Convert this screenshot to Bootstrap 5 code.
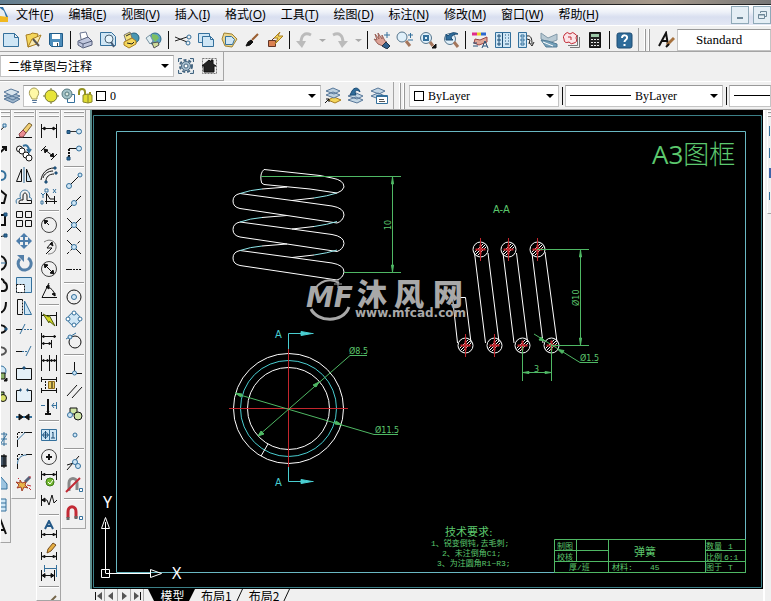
<!DOCTYPE html>
<html lang="zh-CN">
<head>
<meta charset="utf-8">
<meta name="viewport" content="width=device-width, initial-scale=1">
<title>弹簧 - CAD</title>
<link rel="stylesheet" href="https://cdn.jsdelivr.net/npm/bootstrap@5.3.0/dist/css/bootstrap.min.css">
<style>
:root{--face:#f0f0f0;--edge:#a5a5a5;--ui:"Noto Sans","Noto Sans CJK SC",sans-serif;--mono:"Liberation Serif","Noto Sans CJK SC",serif}
body{background:var(--face);font:12px/16px var(--ui);color:#000}
button{border:0;background:none;padding:0;color:inherit}
svg{fill:none;stroke:#111;stroke-width:1;display:block;flex:none}
.top-strip{height:5px;background:linear-gradient(90deg,#5f7d92,#8a8a88 12%,#a09a94 40%,#777 65%,#a89a8c 85%,#777);border-bottom:1px solid #222}
.menu-row{height:20px;background:linear-gradient(#fff 0,#eef1f8 35%,#d9dff0 60%,#e3e7f4)}
.menu-list{gap:15px;margin-left:8px}
.menu-list button{line-height:20px}
.menu-list u{text-underline-offset:2px}
.win-btn{width:18px;height:18px;border:1px solid #8fa9b8;background:#e4eef5}
.tool-row{border-bottom:1px solid var(--edge)}
.row-std{height:27px;padding-top:2px;border-top:1px solid #fff}
.row-ws,.row-layer{height:29px}
.row-ws{border:0}
.row-layer{border-top:1px solid #fff}
.tb{width:23px;height:22px;display:flex;align-items:center;justify-content:center;flex:none}
.tb svg,.side-btn svg{width:18px;height:18px}
.tb-first{width:21px}
.tb-drop{width:13px}
.v-sep{flex:none;width:6px;height:18px;background:linear-gradient(90deg,transparent 3px,#111 3px,#111 4px,transparent 4px)}
.v-end{flex:none;width:4px;align-self:stretch;border-right:1px solid var(--edge)}
.v-grip{flex:none;width:13px;align-self:stretch;margin:1px 1px 0 1px;background:linear-gradient(90deg,transparent 4px,#fff 4px,#fff 5px,#999 5px,#999 6px,transparent 6px,transparent 8px,#fff 8px,#fff 9px,#999 9px,#999 10px,transparent 10px)}
.combo{height:22px;background:#fff;border:1px solid #c4c4c4;border-top-color:#999;min-width:0;gap:1px}
.combo .form-select{--bs-form-select-bg-img:url("data:image/svg+xml,%3Csvg xmlns='http://www.w3.org/2000/svg' viewBox='0 0 8 4'%3E%3Cpath d='M0 0h8L4 4z'/%3E%3C/svg%3E");border:0;border-radius:0;padding:0 16px 0 3px;height:20px;min-width:0;font:12px/20px var(--mono);color:#000;background-color:transparent;background-size:8px 4px;background-position:right 4px center}
.combo .cjk{font-family:"Noto Sans CJK SC",sans-serif;padding-left:7px}
.combo .style-name{font-size:13px;padding-left:18px;background-image:none}
.w-ws{flex:0 1 174px}.w-layer{flex:0 1 298px}.w-color{flex:0 1 150px}.w-line{flex:0 1 158px}.w-rest{flex:1 1 0}
.ws-tools{width:224px;border-right:1px solid var(--edge);border-bottom:1px solid var(--edge)}
.swatch{flex:none;width:10px;height:10px;border:1px solid #000;background:#fff}
.line-demo{flex:none;width:61px;height:1px;background:#000;margin-left:4px}
.side-bar{width:25px;padding-bottom:4px;border-right:1px solid var(--edge);border-bottom:1px solid var(--edge);border-left:1px solid #fff;flex:none;align-self:flex-start}
.side-draw{width:11px;overflow:hidden}
.side-long{align-self:stretch;overflow:hidden}
.side-btn{width:22px;height:22px;display:flex;align-items:center;justify-content:center;flex:none}
.h-grip{width:20px;height:10px;flex:none;background:linear-gradient(transparent 1px,#fff 1px,#fff 2px,#999 2px,#999 3px,transparent 3px,transparent 5px,#fff 5px,#fff 6px,#999 6px,#999 7px,transparent 7px)}
.h-sep{width:20px;height:6px;flex:none;background:linear-gradient(transparent 2px,#999 2px,#999 3px,#fff 3px,#fff 4px,transparent 4px)}
.b{stroke:#34709c}.bf{stroke:#34709c;fill:#cfe6f5}.n{stroke:#1c4c74;fill:#2f6c9a}.g{stroke:#777}.k{fill:#111}.y{fill:#f4d65a;stroke:#a87d20}.r{stroke:#c22a35}.w{fill:#fff}.gn{fill:#73b72d;stroke:#3d7a18}
.d{stroke-dasharray:2 1}.t2{stroke-width:2}.t3{stroke-width:3}
.model-space{background:#000;border-left:2px solid #5f8f8f;min-height:0;min-width:0}
.model-space svg{width:100%;height:100%;stroke:#fff}
.c-gr{stroke:#4fb864}.c-cy{stroke:#49cdd0}.c-fr{stroke:#69b8c2}.c-rd{stroke:#c3262d}
.model-space text{stroke:none;fill:#5cc86e;font-family:"DejaVu Sans","Noto Sans CJK SC",sans-serif}
.model-space .f-dim{font-size:8px}
.model-space .f-note{font-size:8px;font-family:"Liberation Mono","Noto Sans CJK SC",monospace}
.model-space .f-head{font-size:11px}
.model-space .f-frame{font-size:26px;font-weight:300;font-family:"Open Sans","Noto Sans CJK SC",sans-serif}
.model-space .f-frame .latin{font-weight:400}
.model-space .f-sec{font-size:10px}
.model-space .f-cy{fill:#49cdd0}
.model-space .f-ucs{font:16px "Noto Sans",sans-serif;fill:#fff}
.model-space .f-wm{fill:#a8a8a8;font-weight:900;font-size:30px;font-family:"Noto Sans CJK SC",sans-serif}
.model-space .f-url{fill:#a8a8a8;font:bold 12px "DejaVu Sans",sans-serif}
.model-space .f-logo{fill:#a8a8a8;font:italic bold 28px "DejaVu Sans",sans-serif}
.sheet-row{height:12px;flex:none;overflow:hidden;background:var(--face);padding-left:2px}
.page-btn{width:13px;height:14px;border-right:1px solid #aaa;display:flex;align-items:center;justify-content:center;flex:none}
.sheet-tab{height:14px;line-height:14px;padding:0 4px 0 6px;flex:none;font-family:"Noto Sans CJK SC",sans-serif}
.sheet-on{background:#000;color:#fff;width:47px;padding:0 0 0 2px;clip-path:polygon(0 0,100% 0,calc(100% - 7px) 100%,7px 100%)}
.slant{width:7px;height:14px;flex:none}
.right-edge{width:8px;flex:none;border-left:2px solid #fff;overflow:hidden}
.edge-bar{width:4px;height:104px;border-left:1px solid #fff;border-bottom:1px solid var(--edge);overflow:hidden}
.edge-bar .h-grip{width:4px}
</style>
<script src="https://cdn.jsdelivr.net/npm/bootstrap@5.3.0/dist/js/bootstrap.bundle.min.js"></script>
</head>
<body class="vh-100 overflow-hidden d-flex flex-column">
<header class="flex-shrink-0">
<div class="top-strip"></div>
<nav class="menu-row d-flex align-items-center overflow-hidden" aria-label="主菜单">
<svg width="8" height="18" viewBox="0 0 8 18"><path d="M0 1h3l5 10v5H0z" fill="#2d6fa8" stroke="none"/><path d="M0 2l4 3 2 6H0z" fill="#e8edf0" stroke="none"/><path d="M0 10l8 1v5H0z" fill="#f0b820" stroke="none"/></svg>
<div class="menu-list d-flex text-nowrap">
<button>文件(<u>F</u>)</button><button>编辑(<u>E</u>)</button><button>视图(<u>V</u>)</button><button>插入(<u>I</u>)</button><button>格式(<u>O</u>)</button><button>工具(<u>T</u>)</button><button>绘图(<u>D</u>)</button><button>标注(<u>N</u>)</button><button>修改(<u>M</u>)</button><button>窗口(<u>W</u>)</button><button>帮助(<u>H</u>)</button>
</div>
<div class="ms-auto d-flex gap-1 flex-shrink-0">
<button class="win-btn" aria-label="最小化"><svg width="16" height="16" viewBox="0 0 16 16"><path d="M5 11h6" stroke="#6d8798" class="t2"/></svg></button>
<button class="win-btn" aria-label="还原"><svg width="16" height="16" viewBox="0 0 16 16"><path d="M6.500 6V4.500h6v5H11M4.500 7.500h6v4h-6zM4 8h7" stroke="#6d8798"/></svg></button>
</div>
</nav>
<div class="tool-row row-std d-flex align-items-center overflow-hidden">
<button class="tb tb-first" aria-label="新建"><svg viewBox="0 0 18 18"><path class="bf" d="M1.500 2.500h11l4 4v9h-15zM12.500 2.500v4h4"/></svg></button>
<button class="tb" aria-label="打开"><svg viewBox="0 0 18 18"><path class="y" d="M2 4l5-1 1-1 6 1-1 4-4 7-5 2z"/><path fill="#f9eab0" stroke="#a87d20" d="M4 16l4-8 9-4-4 9z"/><path class="t2" d="M9 8l6 7" stroke="#555"/></svg></button>
<button class="tb" aria-label="保存"><svg viewBox="0 0 18 18"><path fill="#4d8dbb" stroke="#205b88" d="M2.500 2.500h13v13h-11l-2-2z"/><path class="w" stroke="none" d="M5 3h8v5H5zM6 11h6v4H6z"/><path stroke="#444" d="M10.500 12v3"/></svg></button>
<span class="v-sep"></span>
<button class="tb" aria-label="打印"><svg viewBox="0 0 18 18"><path fill="#fff" stroke="#6c7792" d="M5 8L4 2l6-1 2 6"/><path fill="#bfc6dd" stroke="#555f7b" d="M2 10l10-4 4 4v4l-9 3-5-3z"/><path stroke="#555f7b" d="M3 11l4 2 9-3M7 13v3"/></svg></button>
<button class="tb" aria-label="打印预览"><svg viewBox="0 0 18 18"><path class="bf" d="M1.500 1.500h11l4 4v9h-15z"/><circle cx="10" cy="8" r="4" fill="#e7f4fb" stroke="#4a6275"/><path class="t2" stroke="#435a75" d="M12 11l3 5"/></svg></button>
<button class="tb" aria-label="发布"><svg viewBox="0 0 18 18"><circle cx="12" cy="7" r="5" fill="#4a97b3" stroke="#26607c"/><path fill="#f4e27a" stroke="#777" d="M2 4l6-3 2 6-6 3z"/><path class="y" d="M2 11l8-4 4 3v3l-7 4-5-3z"/><path stroke="#222" d="M4 5l4-2M5 12l5 1 2-2"/></svg></button>
<button class="tb" aria-label="三维DWF"><svg viewBox="0 0 18 18"><circle cx="10" cy="8" r="6" fill="#5aa2c1" stroke="#2f6c8d"/><path fill="#7ec062" stroke="none" d="M7 3l5 1 2 3-4 4-3-4z"/><path fill="#e0eef2" stroke="#7892a2" d="M1 7l4-3 3 6-3 3z"/><path fill="#cfdc9a" stroke="#555" d="M7 12l6-1 1 3-5 3z"/></svg></button>
<span class="v-sep"></span>
<button class="tb" aria-label="剪切"><svg viewBox="0 0 18 18"><path d="M1 6l12 5M1 10l12-4" stroke="#222"/><circle cx="14" cy="12" r="2" class="b"/><circle cx="15" cy="6" r="2" class="b"/></svg></button>
<button class="tb" aria-label="复制"><svg viewBox="0 0 18 18"><path class="bf" d="M1.500 2.500h11v9h-11z"/><path class="bf" d="M5.500 5.500h8l3 3v7h-11zM13.500 5.500v3h3"/></svg></button>
<button class="tb" aria-label="粘贴"><svg viewBox="0 0 18 18"><path fill="#ecd58d" stroke="#a08436" d="M4 2l8 1 5 5-5 8-7-1-3-7z"/><path class="bf" d="M5.500 5.500h6l3 3-2 5h-7z"/></svg></button>
<button class="tb" aria-label="特性匹配"><svg viewBox="0 0 18 18"><path d="M9 9l6-6" stroke="#9a5e32" class="t2"/><path class="k" d="M3 15l2-4 3-2 2 2-3 3z"/></svg></button>
<button class="tb" aria-label="块编辑器"><svg viewBox="0 0 18 18"><path d="M6 9l6-6M2.500 9.500h7v6h-7z" fill="#db8153" stroke="#613526"/><path class="y" d="M14 1L8 7h4l-3 6 8-8h-5z"/></svg></button>
<span class="v-sep"></span>
<button class="tb" aria-label="放弃"><svg viewBox="0 0 18 18"><path d="M16 4C10 1 6 4 6 12" stroke="#bbb" class="t3"/><path d="M1 10h10l-4 7z" fill="#bbb" stroke="none"/></svg></button>
<button class="tb tb-drop" aria-label="放弃列表"><svg viewBox="0 0 18 18"><path d="M6 8h7l-3.500 3z" fill="#aaa" stroke="none"/></svg></button>
<button class="tb" aria-label="重做"><svg viewBox="0 0 18 18"><path d="M2 4c6-3 10 0 10 8" stroke="#bbb" class="t3"/><path d="M7 10h10l-6 7z" fill="#bbb" stroke="none"/></svg></button>
<button class="tb tb-drop" aria-label="重做列表"><svg viewBox="0 0 18 18"><path d="M6 8h7l-3.500 3z" fill="#aaa" stroke="none"/></svg></button>
<span class="v-sep"></span>
<button class="tb" aria-label="平移"><svg viewBox="0 0 18 18"><path d="M2 3l4 5-1-6 4 6V4l3 6 2 1-4 4-5-2-4-5 3 1z" fill="#dda397" stroke="#9a6259"/><path d="M9 15l4-4 4 4-3 3z" fill="#315f8c" stroke="#234"/><path class="b" d="M14 1v6M11 4h6"/></svg></button>
<button class="tb" aria-label="实时缩放"><svg viewBox="0 0 18 18"><circle cx="6" cy="6" r="5" fill="#e0f0fa" stroke="#56758c"/><path d="M10 10l4 5" class="t3" stroke="#a4765c"/><path d="M12 4h5M14.500 2v5M12 9h5" class="b"/></svg></button>
<button class="tb" aria-label="窗口缩放"><svg viewBox="0 0 18 18"><circle cx="7" cy="7" r="5.500" fill="#e0f0fa" stroke="#56758c"/><path class="b t2" d="M5 5h4v4H5z"/><path d="M11 11l3 4" class="t3" stroke="#a4765c"/><path class="k" d="M17 13v4h-4z"/></svg></button>
<button class="tb" aria-label="缩放上一个"><svg viewBox="0 0 18 18"><circle cx="8" cy="8" r="5.500" fill="#e0f0fa" stroke="#56758c"/><path d="M12 11l4 5" class="t3" stroke="#a4765c"/><path class="n" d="M4 9V3l2 2c3-4 7-4 10-2-4 0-6 1-7 4l2 2z"/></svg></button>
<span class="v-sep"></span>
<button class="tb" aria-label="特性"><svg viewBox="0 0 18 18"><path stroke="#e02c8a" class="t3" d="M1 3h5"/><path stroke="#e9d323" class="t3" d="M6 3h4"/><path stroke="#2b68ce" class="t3" d="M10 3h5"/><path d="M4 8l5 1 7-3v5l-8 3-5-2z" fill="#e0a797" stroke="#944"/><path d="M2 12h4M2 15h5M11 17l3-7 3 7M12 15h4" stroke="#234d74"/></svg></button>
<button class="tb" aria-label="设计中心"><svg viewBox="0 0 18 18"><path class="bf" d="M1.500 1.500h15v15h-15z"/><path stroke="#1d4f77" d="M8.500 2v14M4 4h2v2H4zM4 8h2v2H4zM4 12h2v2H4zM11 4h1M14 4h1M11 7h1M14 7h1M11 10h1M14 10h1M11 13h4"/></svg></button>
<button class="tb" aria-label="工具选项板"><svg viewBox="0 0 18 18"><path class="bf" d="M1.500 1.500h8v15h-8z"/><path class="b" d="M4 4h3v2H4zM4 8h3v2H4zM4 12h3v2H4z"/><path d="M10 5c4-1 5 3 5 8M12 11l3 4 2-4M10 8l3 1-1 4" stroke="#222"/></svg></button>
<button class="tb" aria-label="图纸集"><svg viewBox="0 0 18 18"><path fill="#b9cad4" stroke="#8299a8" d="M1 2l7 5 9-4v6l-8 3-8-4z"/><path fill="#75a0b9" stroke="#527b95" d="M1 9l7 1 9 3v3H6z"/><path stroke="#fff" d="M3 11l10 4"/></svg></button>
<button class="tb" aria-label="标记集"><svg viewBox="0 0 18 18"><path d="M5 14.500h9.500V4M7 16.500h9.500V6" class="g"/><path class="r" fill="#fbe4e7" d="M2 3q2-3 5 0 3-3 5 0 3 1 1 4 2 4-2 5-3 2-5-1-5 2-5-3-2-2 1-5z"/><path class="r" d="M5 6h3v3"/></svg></button>
<button class="tb" aria-label="计算器"><svg viewBox="0 0 18 18"><path fill="#222" d="M3.500 1.500h11v15h-11z"/><path fill="#9dc7a7" stroke="none" d="M5 3h8v3H5z"/><path stroke="#e4e4e4" stroke-dasharray="2 1" d="M5 8.500h8M5 11.500h8M5 14.500h8"/></svg></button>
<span class="v-sep"></span>
<button class="tb" aria-label="帮助"><svg viewBox="0 0 18 18"><rect x="2" y="2" width="15" height="15" rx="2" fill="#2f6c9a" stroke="#1f4d73"/><path d="M7 7c0-4 6-3 5 0 0 2-2.500 1.500-2.500 4M9.500 13v2" stroke="#fff" class="t2"/></svg></button>
<span class="v-end"></span><span class="v-grip"></span>
<button class="tb" aria-label="文字样式"><svg viewBox="0 0 18 18"><path class="t2" d="M2 15L9 2l2 12M5 10h5"/><path d="M10 14l7-7" stroke="#a6713d" class="t3"/><path d="M9 16l3-3" class="t2"/></svg></button>
<div class="combo w-rest d-flex align-items-center"><select class="form-select style-name" aria-label="文字样式名"><option>Standard</option></select></div>
</div>
<div class="tool-row row-ws d-flex">
<div class="ws-tools d-flex align-items-center">
<div class="combo w-ws d-flex"><select class="form-select cjk" aria-label="工作空间"><option>二维草图与注释</option></select></div>
<button class="tb" aria-label="工作空间设置"><svg viewBox="0 0 18 18"><path fill="#c9dce8" stroke="#446580" d="M1.500 5V1.500H5M13 1.500h3.500V5M16.500 13v3.500H13M5 16.500H1.500V13"/><circle cx="9" cy="9" r="6" stroke="#446580" class="t2" stroke-dasharray="3 2"/><circle cx="9" cy="9" r="4.500" stroke="#446580" fill="#a9c0d0"/><circle cx="9" cy="9" r="2" stroke="#446580" fill="#fff"/></svg></button>
<button class="tb" aria-label="我的工作空间"><svg viewBox="0 0 18 18"><path stroke="#777" stroke-dasharray="2 1" d="M2.500 1.500h14v15h-14z"/><path d="M4 15V9L2 9l7-6 2 2V3h2v4l3 2h-2v6z" fill="#222"/></svg></button>
</div></div>
<div class="tool-row row-layer d-flex align-items-center overflow-hidden">
<button class="tb" aria-label="图层特性"><svg viewBox="0 0 18 18"><path fill="#9eb6cc" stroke="#58789a" d="M1 12l8-3 8 3-7 4zM1 9l8-3 8 3-7 4z"/><path fill="#d9e5ee" stroke="#58789a" d="M1 5l7-3 8 3-7 4z"/></svg></button>
<div class="combo w-layer d-flex align-items-center ps-1">
<svg width="13" height="18" viewBox="0 0 13 18"><path fill="#fff8a6" stroke="#a69d53" d="M3 10C-1 5 3 1 6 1s7 4 3 9v2H4z"/><path stroke="#58789a" d="M4 13.500h5M4.500 15.500h4"/></svg>
<svg width="17" height="18" viewBox="0 0 17 18"><circle cx="9" cy="9" r="6" fill="#e7e438" stroke="#74742a"/><path stroke="#77772c" d="M9 1v2M9 15v2M1 9h2M15 9h2"/></svg>
<svg width="16" height="18" viewBox="0 0 16 18"><path class="b" d="M7.500 7.500h7v8h-7z"/><circle cx="7" cy="7" r="5" fill="#a3c3c8" stroke="#56797f"/><circle cx="7" cy="7" r="2" fill="#d9e9df" stroke="#56797f"/></svg>
<svg width="18" height="18" viewBox="0 0 18 18"><path stroke="#949322" class="t2" d="M2 8V5c0-4 6-4 6 0v4M13 7V5"/><path fill="#dfdc33" stroke="#88862a" d="M6 8l5-1 4 1v7l-4 1-5-1zM11 7v9"/></svg>
<span class="swatch"></span>
<select class="form-select" aria-label="图层"><option>0</option></select></div>
<button class="tb" aria-label="置为当前图层"><svg viewBox="0 0 18 18"><path class="y" d="M4 13l6-3 7 3-6 3z"/><path fill="#bcd0df" stroke="#58789a" d="M2 8l7-3 7 3-6 3zM2 4l7-3 7 3-6 3z"/><path d="M1 16l4-4M2 12h3v3"/></svg></button>
<button class="tb" aria-label="上一个图层"><svg viewBox="0 0 18 18"><path fill="#c3d6e4" stroke="#58789a" d="M1 13l8-3 7 3-6 3zM1 9l8-3 7 3-6 3z"/><path class="n" d="M3 8l2-4c2-4 7-4 8 1-2-2-4-2-5 0l1 3z"/></svg></button>
<button class="tb" aria-label="图层状态"><svg viewBox="0 0 18 18"><path fill="#c3d6e4" stroke="#58789a" d="M1 9l7-3 7 3-6 3zM1 4l7-3 7 3-6 3z"/><path class="b w" d="M6.500 8.500h11v8h-11z"/><path class="b t2" d="M7 9h10"/><path stroke="#555" d="M9 12.500h5M9 14.500h6"/></svg></button>
<span class="v-end"></span><span class="v-grip"></span>
<div class="combo w-color d-flex align-items-center ps-1"><span class="swatch"></span><select class="form-select" aria-label="颜色"><option>ByLayer</option></select></div>
<span class="v-sep"></span>
<div class="combo w-line d-flex align-items-center"><span class="line-demo"></span><select class="form-select" aria-label="线型"><option>ByLayer</option></select></div>
<span class="v-sep"></span>
<div class="combo w-rest d-flex align-items-center overflow-hidden"><span class="line-demo"></span></div>
</div>
</header>
<main class="d-flex flex-grow-1 overflow-hidden">
<aside class="side-bar side-draw d-flex flex-column align-items-end" aria-label="绘图">
<span class="h-grip"></span>
<button class="side-btn" aria-label="直线"><svg viewBox="0 0 18 18"><path d="M3 15L15 4"/><path class="bf" d="M13 2h3v3h-3z"/></svg></button>
<button class="side-btn" aria-label="构造线"><svg viewBox="0 0 18 18"><path class="t2" d="M2 16L16 3M12 3h4v4"/></svg></button>
<button class="side-btn" aria-label="多段线"><svg viewBox="0 0 18 18"><path class="b t2" d="M2 14h9c6 0 6-9 0-9"/></svg></button>
<button class="side-btn" aria-label="正多边形"><svg viewBox="0 0 18 18"><path class="t2" d="M3 6l7-4 6 5-2 8H5z"/></svg></button>
<button class="side-btn" aria-label="矩形"><svg viewBox="0 0 18 18"><path class="t2" d="M2 5h13v10H2z"/><path class="n" d="M14 3h3v3h-3z"/></svg></button>
<button class="side-btn" aria-label="圆弧"><svg viewBox="0 0 18 18"><path d="M3 15c0-7 5-11 12-11"/><path class="n" d="M14 2h3v3h-3z"/></svg></button>
<button class="side-btn" aria-label="圆"><svg viewBox="0 0 18 18"><circle class="t2" cx="9" cy="9" r="7"/><path class="b" d="M9 9h7"/></svg></button>
<button class="side-btn" aria-label="修订云线"><svg viewBox="0 0 18 18"><path class="t2" d="M4 15c-4-4 0-7 2-6 0-7 7-8 8-3 4 2 4 8 0 9z"/></svg></button>
<button class="side-btn" aria-label="样条曲线"><svg viewBox="0 0 18 18"><path class="t2" d="M2 10c3-8 6 6 10 4 3-2 4-6 4-10"/></svg></button>
<button class="side-btn" aria-label="椭圆"><svg viewBox="0 0 18 18"><ellipse class="t2" cx="9" cy="9" rx="7" ry="4"/><path class="n" d="M15 8h2v2h-2z"/></svg></button>
<button class="side-btn" aria-label="椭圆弧"><svg viewBox="0 0 18 18"><ellipse class="t2" cx="9" cy="9" rx="7" ry="4" stroke="#555"/></svg></button>
<button class="side-btn" aria-label="插入块"><svg viewBox="0 0 18 18"><circle cx="11" cy="7" r="5" class="bf"/><path d="M10 9h5v6h-5z" fill="#8db36b"/><path class="k" d="M17 14v3h-3z"/></svg></button>
<button class="side-btn" aria-label="创建块"><svg viewBox="0 0 18 18"><path fill="#8db36b" d="M8 6h6v5H8z"/><circle cx="13" cy="12" r="3.500" fill="#d9df6b"/></svg></button>
<button class="side-btn" aria-label="点"><svg viewBox="0 0 18 18"><path class="b" d="M9 8v2"/></svg></button>
<button class="side-btn" aria-label="图案填充"><svg viewBox="0 0 18 18"><path class="b" d="M2 4h15M2 9h15M2 14h15M14 2v14M9 16l8-12"/></svg></button>
<button class="side-btn" aria-label="渐变色"><svg viewBox="0 0 18 18"><path fill="#456" d="M9 4h7v10H9z"/><path d="M7 4h10M7 14h10M14 2v14"/></svg></button>
<button class="side-btn" aria-label="面域"><svg viewBox="0 0 18 18"><path fill="#9cc4e0" stroke="#34709c" d="M3 15V7l8-4 6 7v5z"/></svg></button>
<button class="side-btn" aria-label="表格"><svg viewBox="0 0 18 18"><path class="bf" d="M3 3h13v12H3zM3 7h13M3 11h13"/></svg></button>
<button class="side-btn" aria-label="多行文字"><svg viewBox="0 0 18 18"><path class="t2" d="M6 16l5-13 5 13M8 12h6"/></svg></button>
</aside>
<aside class="side-bar d-flex flex-column align-items-center" aria-label="修改">
<span class="h-grip"></span>
<button class="side-btn" aria-label="删除"><svg viewBox="0 0 18 18"><path d="M1 15.500h16"/><path fill="#f2cf73" stroke="#77602f" d="M8 8l6-7 3 2-6 8z"/><path fill="#e98c91" stroke="#8c4448" d="M4 12l4-4 3 3-3 4H5z"/></svg></button>
<button class="side-btn" aria-label="复制对象"><svg viewBox="0 0 18 18"><circle cx="4.500" cy="5" r="3" class="w"/><circle cx="7" cy="7" r="3" class="w"/><circle cx="11" cy="11" r="3" class="w"/><circle cx="14" cy="14" r="3" class="w"/><path class="b t2" d="M8 2c4-2 6 1 6 5M12 5l2 3 2-3"/></svg></button>
<button class="side-btn" aria-label="镜像"><svg viewBox="0 0 18 18"><path d="M6.500 3v12.500h-5z"/><path d="M11.500 3v12.500h5z" fill="#cfe6f5"/><path class="b" d="M9 1v16"/></svg></button>
<button class="side-btn" aria-label="偏移"><svg viewBox="0 0 18 18"><path class="b" d="M1.500 15.500c-1-4 0-5 4-5-3-11 11-11 9-1 2 0 2 1 2 3"/><path d="M4 15.500h12.500v-3H12V8c0-4-4-4-4 0v4H6c-2 0-2 2-2 3.500z"/></svg></button>
<button class="side-btn" aria-label="阵列"><svg viewBox="0 0 18 18"><path d="M1.500 1.500h6v6h-6zM10.500 1.500h6v6h-6zM1.500 10.500h6v6h-6zM10.500 10.500h6v6h-6z"/></svg></button>
<button class="side-btn" aria-label="移动"><svg viewBox="0 0 18 18"><path class="t2" stroke="#4c7dab" d="M9 3v12M3 9h12"/><path fill="#4c7dab" stroke="none" d="M9 1l4 4H5zM9 17l4-4H5zM1 9l4-4v8zM17 9l-4-4v8z"/></svg></button>
<button class="side-btn" aria-label="旋转"><svg viewBox="0 0 18 18"><path class="t3" stroke="#537fa8" d="M5 5a6.500 6.500 0 1 0 8-1"/><path fill="#537fa8" stroke="none" d="M2 1h7v7z"/></svg></button>
<button class="side-btn" aria-label="缩放"><svg viewBox="0 0 18 18"><path class="bf" d="M1.500 1.500h15v15h-15z"/><path class="d w" d="M1.500 8.500h8v8h-8z"/></svg></button>
<button class="side-btn" aria-label="拉伸"><svg viewBox="0 0 18 18"><path d="M7.500 1.500h-5v15h5" /><path class="d" d="M7.500 1.500v15"/><path class="bf" d="M9.500 3l7 13.500h-7z"/></svg></button>
<button class="side-btn" aria-label="修剪"><svg viewBox="0 0 18 18"><path class="b" d="M10 4L5 14"/><path d="M1 9.500h6"/><path class="d b" d="M9 9.500h8"/></svg></button>
<button class="side-btn" aria-label="延伸"><svg viewBox="0 0 18 18"><path class="b" d="M16 4l-5 10"/><path d="M1 9.500h6"/><path class="d b" d="M7 9.500h5"/></svg></button>
<button class="side-btn" aria-label="打断于点"><svg viewBox="0 0 18 18"><path fill="#e4f0f8" d="M1.500 4.500h15v11h-15z"/><path class="n" d="M8 3h2v2H8z"/></svg></button>
<button class="side-btn" aria-label="打断"><svg viewBox="0 0 18 18"><path fill="#e4f0f8" stroke="none" d="M1.500 4.500h15v11h-15z"/><path d="M5 4.500H1.500v11h15v-11H13"/><path class="n" d="M5 3h1v2H5zM12 3h1v2h-1z"/></svg></button>
<button class="side-btn" aria-label="合并"><svg viewBox="0 0 18 18"><path class="b t2" d="M1 9h16"/><path class="k" d="M4 6l4 3-4 3zM14 6l-4 3 4 3z"/></svg></button>
<button class="side-btn" aria-label="倒角"><svg viewBox="0 0 18 18"><path class="d" d="M2.500 8V2.500H9"/><path d="M2.500 17v-7M9 2.500h8"/><path class="b" d="M2.500 10L10 2.500"/></svg></button>
<button class="side-btn" aria-label="圆角"><svg viewBox="0 0 18 18"><path class="d" d="M2.500 8V2.500H9"/><path d="M2.500 17v-5M11 2.500h6"/><path class="b" d="M2.500 12c0-5 3-9 9-9"/></svg></button>
<button class="side-btn" aria-label="分解"><svg viewBox="0 0 18 18"><path class="t3" stroke="#57617a" d="M10 8l5-5"/><path fill="#e8b54a" stroke="#a33d2a" d="M5 6l2 3 4-1-1 3 3 3-4-1-2 4-1-4-4 1 2-3-3-3 4 1z"/><path class="r" d="M3 4l1 1M12 11l4 1M14 14l2 2M15 2v2"/></svg></button>
</aside>
<aside class="side-bar side-long d-flex flex-column align-items-center" aria-label="标注">
<span class="h-grip"></span>
<button class="side-btn" aria-label="线性"><svg viewBox="0 0 18 18"><path d="M1.500 2v14M16.500 2v14"/><path d="M2 6.500h14"/><path d="M5 5L2.500 6.500 5 8zM13 5l2.500 1.500L13 8z" class="k"/></svg></button>
<button class="side-btn" aria-label="对齐"><svg viewBox="0 0 18 18"><path d="M1 7l5-5M11 16l6-6M4 5l10 8"/><path class="k" d="M4 5l4 1-3 3zM14 13l-4-1 3-3z"/></svg></button>
<button class="side-btn" aria-label="弧长"><svg viewBox="0 0 18 18"><path d="M1 14C2 7 7 2 14 2M6 15c0-4 3-7 8-7"/><path d="M3 12C4 8 8 5 13 5"/><path class="n" d="M14 1h2v2h-2zM15 6h2v2h-2zM5 15h2v2H5z"/></svg></button>
<button class="side-btn" aria-label="坐标"><svg viewBox="0 0 18 18"><path d="M6.500 5v11M5 13.500h12M7 6l3 5h4M14.500 8v8"/><path class="b" d="M1 5l2 2 2-2M3 7v3M13 1l3 4M16 1l-3 4M5 1h3v3H5zM1 13h2v3H1z"/></svg></button>
<span class="h-sep"></span>
<button class="side-btn" aria-label="半径"><svg viewBox="0 0 18 18"><circle cx="9" cy="9" r="7.500" stroke="#444"/><path class="k" d="M4 4l5 5M4 4l4 1-3 3z"/></svg></button>
<button class="side-btn" aria-label="折弯"><svg viewBox="0 0 18 18"><path stroke="#777" d="M4 4c7-5 13 1 12 6s-5 6-8 6"/><path d="M12 4l-5 6h5l-6 6"/><path class="k" d="M12 4l1 4-3-2z"/></svg></button>
<button class="side-btn" aria-label="直径"><svg viewBox="0 0 18 18"><circle cx="9" cy="9" r="7.500" stroke="#444"/><path class="k" d="M4 4l10 10M4 4l4 1-3 3zM14 14l-4-1 3-3z"/></svg></button>
<button class="side-btn" aria-label="角度"><svg viewBox="0 0 18 18"><path d="M9 1L2 15.500h15M6 5c5 0 8 4 9 9"/><path class="k" d="M6 5l3-2v4zM15 14l-3-2 3-1z"/></svg></button>
<span class="h-sep"></span>
<button class="side-btn" aria-label="快速标注"><svg viewBox="0 0 18 18"><path d="M1.500 2v14M16.500 2v14M2 5.500h14"/><path fill="#d6dc26" stroke="#54600f" d="M3 4l6 3V5l6 11-6-5v2z"/></svg></button>
<button class="side-btn" aria-label="基线"><svg viewBox="0 0 18 18"><path d="M1.500 1v16M2 4.500h14M2 11.500h9M11.500 8v8"/><path class="k" d="M2 4.500l2-1v2zM16 4.500l-2-1v2zM2 11.500l2-1v2zM11 11.500l-2-1v2z"/></svg></button>
<button class="side-btn" aria-label="连续"><svg viewBox="0 0 18 18"><path d="M1.500 1v16M9.500 1v16M16.500 1v16M2 6.500h14"/><path class="k" d="M2 6.500l2-1v2zM9 6.500l-2-1v2zM10 6.500l2-1v2zM16 6.500l-2-1v2z"/></svg></button>
<button class="side-btn" aria-label="标注间距"><svg viewBox="0 0 18 18"><path d="M1.500 1v5M16.500 1v5M1.500 12v5M16.500 12v5M2 3.500h14M2 14.500h14"/><path fill="#e7ca5a" stroke="#8d6a1c" d="M8.500 5.500h6v7h-6z"/><path class="d" d="M5.500 5v8"/><path d="M11 7h2M11 9h2M11 11h2"/></svg></button>
<button class="side-btn" aria-label="折断标注"><svg viewBox="0 0 18 18"><path class="b" d="M1 7.500h4M12 7.500h5M14 5l-2 2.500 2 2.500M16.500 4v7"/><path class="t2" d="M8 1v15M5 16h6"/><path class="k" d="M8 16l-1-3h2z"/></svg></button>
<span class="h-sep"></span>
<button class="side-btn" aria-label="公差"><svg viewBox="0 0 18 18"><path class="bf" d="M1.500 3.500h15v11h-15zM9.500 3v12"/><circle class="b" cx="5.500" cy="9" r="2.500"/><path stroke="#1c4c74" d="M5.500 5v8M2 9h7M12 7l1-1v6M11 12h4"/></svg></button>
<button class="side-btn" aria-label="圆心标记"><svg viewBox="0 0 18 18"><circle cx="9" cy="9" r="7.500" stroke="#444"/><path class="t2" d="M9 6v6M6 9h6"/></svg></button>
<button class="side-btn" aria-label="检验"><svg viewBox="0 0 18 18"><path class="k" d="M1.500 1v9M16.500 1v9M2 4.500h14M2 4.500l3-1v2zM16 4.500l-3-1v2z"/><circle class="gn" cx="10" cy="12" r="4"/><path stroke="#fff" d="M8 12l2 2 3-4"/></svg></button>
<button class="side-btn" aria-label="折弯线性"><svg viewBox="0 0 18 18"><path d="M1.500 3v11M2 8h5l2 5 3-10 2 8 3-3"/><path class="k" d="M2 8l3-2v4z"/></svg></button>
<span class="h-sep"></span>
<button class="side-btn" aria-label="编辑标注"><svg viewBox="0 0 18 18"><path class="t2" stroke="#235887" d="M5 9l4-8 4 8M6 6h6"/><path class="k" d="M1.500 10v8M16.500 10v8M2 14.500h14M2 14.500l3-1v2zM16 14.500l-3-1v2z"/></svg></button>
<button class="side-btn" aria-label="编辑标注文字"><svg viewBox="0 0 18 18"><path fill="#e4ad41" stroke="#754c20" d="M8 7l5-6 3 2-5 6-4 2z"/><path class="k" d="M1.500 10v8M16.500 10v8M2 14.500h14M2 14.500l3-1v2zM16 14.500l-3-1v2z"/></svg></button>
<button class="side-btn" aria-label="标注更新"><svg viewBox="0 0 18 18"><path class="b" d="M4.500 1v7M16.500 1v12M4 4.500h12"/><path class="k" d="M1.500 6v11M14.500 6v11M2 11.500h12M2 11.500l3-2v4zM14 11.500l-3-2v4z"/></svg></button>
<span class="h-sep"></span>
<button class="side-btn" aria-label="标注样式"><svg viewBox="0 0 18 18"><path class="t2" stroke="#75664a" d="M7 13l9-9"/><path stroke="#333" d="M9 14l5-6"/></svg></button>
</aside>
<aside class="side-bar d-flex flex-column align-items-center" aria-label="对象捕捉">
<span class="h-grip"></span>
<button class="side-btn" aria-label="临时追踪点"><svg viewBox="0 0 18 18"><path d="M4 9.500h8" stroke="#333"/><path class="n" d="M2 8.500h3v3H2z"/><circle cx="14" cy="9.500" r="2.500" class="bf"/></svg></button>
<button class="side-btn" aria-label="捕捉自"><svg viewBox="0 0 18 18"><path d="M4 4.500h8" /><path class="d t2" d="M4 5v8"/><path class="n" d="M2 13h3v3H2z"/><circle cx="14" cy="4.500" r="2.500" class="bf"/></svg></button>
<span class="h-sep"></span>
<button class="side-btn" aria-label="端点"><svg viewBox="0 0 18 18"><path d="M4 14L15 3"/><circle cx="4" cy="14" r="2.500" class="bf"/><circle cx="15" cy="3" r="2" class="bf"/></svg></button>
<button class="side-btn" aria-label="中点"><svg viewBox="0 0 18 18"><path d="M2 16L16 2"/><circle cx="9" cy="9" r="2.500" class="bf"/></svg></button>
<button class="side-btn" aria-label="交点"><svg viewBox="0 0 18 18"><path d="M2 2l14 14M2 16L16 2"/><circle cx="9" cy="9" r="2.500" class="bf"/></svg></button>
<button class="side-btn" aria-label="外观交点"><svg viewBox="0 0 18 18"><path d="M2 2l14 14"/><path stroke-dasharray="3 2" d="M2 16L16 2"/><circle cx="9" cy="9" r="2.500" class="bf"/></svg></button>
<button class="side-btn" aria-label="延长线"><svg viewBox="0 0 18 18"><path d="M1 9.500h6"/><path stroke-dasharray="2 1" d="M8 9.500h9"/></svg></button>
<span class="h-sep"></span>
<button class="side-btn" aria-label="圆心"><svg viewBox="0 0 18 18"><circle cx="9" cy="9" r="7"/><circle class="bf" cx="9" cy="9" r="2.500"/></svg></button>
<button class="side-btn" aria-label="象限点"><svg viewBox="0 0 18 18"><circle cx="9" cy="9" r="6" class="bf"/><circle class="w b" cx="9" cy="3" r="2"/><circle class="w b" cx="9" cy="15" r="2"/><circle class="w b" cx="3" cy="9" r="2"/><circle class="w b" cx="15" cy="9" r="2"/></svg></button>
<button class="side-btn" aria-label="切点"><svg viewBox="0 0 18 18"><circle cx="10" cy="10" r="6"/><path d="M1 7l10-6" class="b"/><circle cx="5" cy="5" r="2" class="bf"/></svg></button>
<span class="h-sep"></span>
<button class="side-btn" aria-label="垂足"><svg viewBox="0 0 18 18"><path d="M1 13.500h16M9.500 2v9"/><circle cx="9.500" cy="13" r="2" class="bf"/></svg></button>
<button class="side-btn" aria-label="平行线"><svg viewBox="0 0 18 18"><path d="M2 14L12 3M7 16L17 5"/></svg></button>
<button class="side-btn" aria-label="插入点"><svg viewBox="0 0 18 18"><path fill="#cfe5a5" d="M5 4h7v6H5z"/><circle cx="13" cy="12" r="4" fill="#cfe5a5"/><circle cx="5" cy="11" r="2.500" class="bf"/></svg></button>
<button class="side-btn" aria-label="节点"><svg viewBox="0 0 18 18"><circle cx="10" cy="9" r="2" class="bf"/></svg></button>
<span class="h-sep"></span>
<button class="side-btn" aria-label="最近点"><svg viewBox="0 0 18 18"><path d="M2 16L14 2M2 11l10-3"/><circle cx="10" cy="8" r="2.500" class="bf"/><circle cx="13" cy="12" r="2.500" class="bf"/></svg></button>
<button class="side-btn" aria-label="无捕捉"><svg viewBox="0 0 18 18"><path stroke="#888" class="t3" d="M4 15V7c0-6 8-6 8 0v7"/><path class="r t2" d="M1 16L15 2"/><path class="b w" d="M14.500 12.500h3v3h-3z"/></svg></button>
<span class="h-sep"></span>
<button class="side-btn" aria-label="捕捉设置"><svg viewBox="0 0 18 18"><path class="r t3" d="M3 14V8c0-7 8-7 8 0v6"/><path stroke="#666" class="t3" d="M3 13v3M11 12v3"/><path class="b w" d="M14.500 12.500h3v3h-3z"/></svg></button>
</aside>
<section class="d-flex flex-column flex-grow-1 ms-1 overflow-hidden">
<div class="model-space flex-grow-1">
<svg viewBox="92 110 671 479" preserveAspectRatio="xMinYMin meet" role="img" aria-label="弹簧图纸">
<g class="c-fr"><path d="M93.500 115.500h668v472h-668z" stroke="#3c8088"/><path d="M116.500 131.500h629v441h-629z"/></g>
<text class="f-frame" x="652" y="164"><tspan class="latin">A3</tspan>图框</text>
<!-- spring elevation -->
<defs>
<g id="coil"><path d="M240 193.500L292 200.500L332 206Q344 208 344 215Q343 221 337 223M240 193.500Q233 195 233 201Q233 207 240 208.500L287 215.500L337 223"/><path d="M240 193.500Q250 190 262 189M314 198Q328 196 337 193" stroke="#8fe6ea"/><path d="M262 189L287 187M292 200.500L314 198"/></g>
<g id="wire"><circle r="7.500"/><path d="M-6 3L3-6M-5 5L5-5M-3 6L6-3"/><path class="c-rd" d="M-5 0H5M0-5V5" stroke-width="2"/></g>
</defs>
<use href="#coil"/><use href="#coil" y="28.500"/><use href="#coil" y="57"/>
<path d="M264 169.500L320 175.500L332 178Q344 180 344 187Q343 191 337 193L310 189L264 184.500M264 169.500Q260 173 261 180Q261 184 264 184.500"/>
<g class="c-gr"><path d="M261 176.500h140M344 272.500h57M392.500 177v95"/><path fill="#4fb864" d="M391.500 184h2l-1-7zM391.500 265h2l-1 7z"/></g>
<text class="f-dim" transform="translate(391 230) rotate(-90)">10</text>
<!-- end view -->
<circle cx="288.500" cy="408.500" r="55"/><circle cx="288.500" cy="408.500" r="48" class="c-cy"/><circle cx="288.500" cy="408.500" r="41"/><path d="M261 456l7-12"/>
<path class="c-rd" d="M229 408.500h119M288.500 349v118"/>
<g class="c-cy"><path d="M288.500 349v-15.500h25M288.500 467v14.500h25"/><path fill="#49cdd0" d="M301 331.500v4l11-2zM301 479.500v4l11-2z"/></g>
<text class="f-sec f-cy" x="275" y="338">A</text><text class="f-sec f-cy" x="275" y="486">A</text>
<g class="c-gr"><path d="M258 436l92-80.500h17M235 393.500l139 41h24"/><path fill="#4fb864" d="M258 436l3-5 3 3zM319 382l-6 3 3 2zM235 393l7 1-1 3zM342 425l-7-1 1-3z"/></g>
<text class="f-dim" x="349" y="354">Ø8.5</text><text class="f-dim" x="375" y="433">Ø11.5</text>
<!-- section view -->
<text class="f-sec" x="493" y="213">A-A</text>
<path d="M474.500 253l11 90M488 253l11 89M503 253l11 90M516.500 253l11 89M532 253l11 90M545 252l12 90M457.500 343l-5-45.500h13l5.500 45"/>
<use href="#wire" x="480.500" y="249.500"/><use href="#wire" x="508.500" y="249.500"/><use href="#wire" x="537.500" y="249.500"/><use href="#wire" x="465.500" y="345.500"/><use href="#wire" x="494.500" y="345.500"/><use href="#wire" x="522.500" y="345.500"/><use href="#wire" x="551.500" y="345.500"/>
<path class="c-rd" d="M480.500 238v23M508.500 238v23M537.500 238v23M465.500 334v23M494.500 334v23"/>
<g class="c-gr"><path d="M537 249.500h52M551 345.500h38M580.500 250v95M522.500 346v35M551.500 346v35M523 372.500h28M534 334l46 28.500h18"/><path fill="#4fb864" d="M579.500 257h2l-1-7zM579.500 338h2l-1 7zM523 372.500l6-1v2zM551 372.500l-6-1v2zM558 349.500l6 1-2 3zM545 341l-6-1 2-3z"/></g>
<text class="f-dim" transform="translate(579 306) rotate(-90)">Ø10</text><text class="f-dim" x="534" y="372">3</text><text class="f-dim" x="580" y="361">Ø1.5</text>
<!-- notes and title block -->
<text class="f-head" x="445" y="536">技术要求:</text>
<text class="f-note" x="431" y="546">1、锐变倒钝,去毛刺;</text><text class="f-note" x="442" y="556">2、未注倒角C1;</text><text class="f-note" x="437" y="566">3、为注圆角R1~R3;</text>
<path class="c-gr" d="M554.500 539.500h191v33h-191zM554 550.500h54M705 550.500h40M554 561.500h191M576.500 540v21M608.500 540v32M705.500 540v32"/>
<text class="f-note" x="557" y="549">制图</text><text class="f-note" x="557" y="560">校核</text><text class="f-note" x="569" y="570">厚/班</text><text class="f-head" x="634" y="556">弹簧</text><text class="f-note" x="612" y="570">材料:</text><text class="f-note" x="650" y="570">45</text><text class="f-note" x="706" y="549">数量</text><text class="f-note" x="728" y="549">1</text><text class="f-note" x="706" y="560">比例</text><text class="f-note" x="724" y="560">6:1</text><text class="f-note" x="706" y="570">图于</text><text class="f-note" x="728" y="570">T</text>
<!-- coordinate axes -->
<path d="M101.500 569.500h8v8h-8zM105.500 573V529M105.500 573.500H150M101.500 528.500l4-11 4 11zM150.500 569.500l11 4-11 4zM105.500 528v-6"/>
<text class="f-ucs" x="103" y="508">Y</text><text class="f-ucs" x="172" y="579">X</text>
<!-- site mark -->
<g stroke="#a8a8a8"><path d="M314 291c5-10 16-14 25-8" class="t2"/><path d="M311 309c6 13 32 15 38-2" class="t3"/><path fill="#a8a8a8" d="M338 280v8M334 284h8"/></g>
<text class="f-logo" x="306" y="307">MF</text>
<text class="f-wm" x="357" y="305">沐</text><text class="f-wm" x="394" y="305">风</text><text class="f-wm" x="433" y="305">网</text>
<text class="f-url" x="355" y="317">www.mfcad.com</text>
</svg>
</div>
<nav class="sheet-row d-flex" aria-label="图纸空间">
<button class="page-btn" aria-label="第一页"><svg width="10" height="12" viewBox="0 0 10 12"><path d="M2.500 2v8"/><path d="M9 2v8L4 6z" fill="#555" stroke="none"/></svg></button>
<button class="page-btn" aria-label="上一页"><svg width="10" height="12" viewBox="0 0 10 12"><path d="M7 2v8L2 6z" fill="#555" stroke="none"/></svg></button>
<button class="page-btn" aria-label="下一页"><svg width="10" height="12" viewBox="0 0 10 12"><path d="M3 2v8l5-4z" fill="#555" stroke="none"/></svg></button>
<button class="page-btn" aria-label="最后一页"><svg width="10" height="12" viewBox="0 0 10 12"><path d="M8.500 2v8"/><path d="M2 2v8l5-4z" fill="#555" stroke="none"/></svg></button>
<button class="sheet-tab sheet-on ms-1">模型</button>
<button class="sheet-tab">布局1</button><svg class="slant" viewBox="0 0 7 14"><path d="M6.500 0L0 14"/></svg>
<button class="sheet-tab">布局2</button><svg class="slant" viewBox="0 0 7 14"><path d="M6.500 0L0 14"/></svg>
</nav>
</section>
<aside class="right-edge d-flex flex-column align-items-end" aria-label="绘图次序">
<div class="edge-bar d-flex flex-column align-items-end"><span class="h-grip"></span>
<svg width="3" height="90" viewBox="0 0 3 90"><path class="b" d="M1.500 6v10M1.500 28v10M1.500 72v8"/><path class="t2" stroke="#3d63a8" d="M2 48v10"/></svg></div>
</aside>
</main>
</body>
</html>
